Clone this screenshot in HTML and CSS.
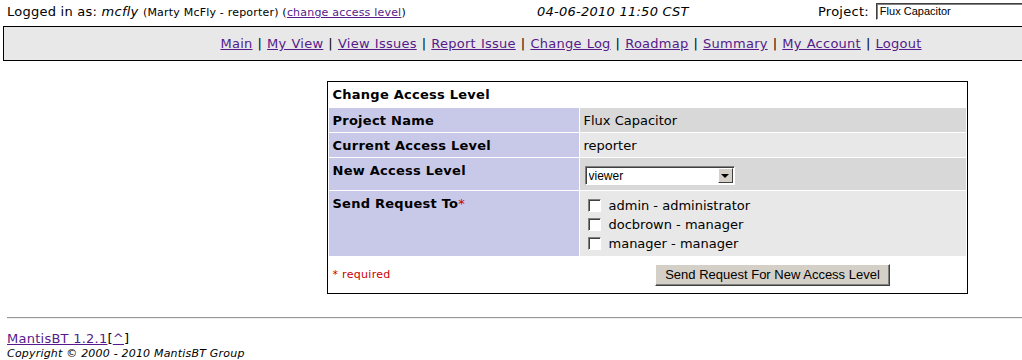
FILE: index.html
```html
<!DOCTYPE html>
<html lang="en">
<head>
    <meta charset="UTF-8">
    <title>Change Access Level - MantisBT</title>
    <link rel="stylesheet" href="styles.css">
</head>
<body>
    <div class="page">
        <div class="login-info">
            <div class="login-user">
                Logged in as: <em>mcfly</em>
                <small>(Marty McFly - reporter) (<a href="#">change access level</a>)</small>
            </div>
            <div class="login-time">04-06-2010 11:50 CST</div>
            <div class="login-project">
                Project:
                <select class="project-select">
                    <option>Flux Capacitor</option>
                </select>
            </div>
        </div>

        <div class="menu">
            <div class="menu-links">
                <a href="#">Main</a> |
                <a href="#">My View</a> |
                <a href="#">View Issues</a> |
                <a href="#">Report Issue</a> |
                <a href="#">Change Log</a> |
                <a href="#">Roadmap</a> |
                <a href="#">Summary</a> |
                <a href="#">My Account</a> |
                <a href="#">Logout</a>
            </div>
            <div class="menu-jump"></div>
        </div>

        <form class="access-form">
            <div class="form-title">Change Access Level</div>

            <div class="form-label">Project Name</div>
            <div class="form-value row-dark">Flux Capacitor</div>

            <div class="form-label">Current Access Level</div>
            <div class="form-value row-light">reporter</div>

            <div class="form-label">New Access Level</div>
            <div class="form-value row-dark select-cell">
                <span class="select-wrap">
                    <select class="level-select">
                        <option>viewer</option>
                        <option>reporter</option>
                        <option>updater</option>
                    </select>
                </span>
            </div>

            <div class="form-label">Send Request To<span class="required">*</span></div>
            <div class="form-value row-light checks">
                <label><input type="checkbox"> admin - administrator</label>
                <label><input type="checkbox"> docbrown - manager</label>
                <label><input type="checkbox"> manager - manager</label>
            </div>

            <div class="form-foot-left"><span class="required">* required</span></div>
            <div class="form-foot-right">
                <button type="button" class="button">Send Request For New Access Level</button>
            </div>
        </form>

        <hr class="footer-rule">
        <div class="footer">
            <a href="#">MantisBT 1.2.1</a>[<a href="#">^</a>]
            <div class="copyright">Copyright &copy; 2000 - 2010 MantisBT Group</div>
        </div>
    </div>
</body>
</html>
```

FILE: styles.css
```css
html, body {
    overflow-x: hidden;
}

body {
    margin: 0;
    background: #fff;
    color: #000;
    font-family: 'DejaVu Sans', Verdana, sans-serif;
    font-size: 13px;
    letter-spacing: 0.25px;
}

a {
    color: #551a8b;
}

.page {
    width: 1280px;
    padding: 0 7px;
}

/* top line */
.login-info {
    display: grid;
    grid-template-columns: 530px 281px auto;
    align-items: center;
    height: 22px;
}

.login-user small {
    font-size: 11px;
    letter-spacing: 0.2px;
}

.login-time {
    font-style: italic;
}

.login-project {
    display: flex;
    align-items: center;
    gap: 7px;
}

.project-select {
    appearance: none;
    width: 190px;
    height: 17px;
    margin: 0;
    padding: 0 3px;
    border: 1px solid #fff;
    border-top-color: #404040;
    border-left-color: #404040;
    box-shadow: inset 1px 1px 0 #808080;
    background: #fff;
    font-family: 'Liberation Sans', Arial, sans-serif;
    font-size: 11px;
    letter-spacing: 0;
    color: #000;
}

/* menu */
.menu {
    display: flex;
    margin: 4px -4px 0;
    border: 1px solid #000;
    background: #e8e8e8;
    height: 33px;
    align-items: center;
}

.menu-links {
    width: 1134px;
    text-align: center;
    word-spacing: 0.6px;
}

.menu-jump {
    flex: 1;
}

/* change access level form */
.access-form {
    display: grid;
    grid-template-columns: 250px 1fr;
    gap: 1px;
    width: 641px;
    box-sizing: border-box;
    margin: 20px auto 0;
    padding: 1px;
    border: 1px solid #000;
    background: #fff;
}

.form-title {
    grid-column: 1 / 3;
    padding: 4px 4px 4px;
    font-weight: bold;
    line-height: 16px;
}

.form-label {
    background: #c8c8e8;
    padding: 5px 4px 3px;
    font-weight: bold;
    line-height: 16px;
}

.form-value {
    padding: 5px 4px 3px;
    line-height: 16px;
    letter-spacing: 0;
}

.row-dark {
    background: #d8d8d8;
}

.row-light {
    background: #e8e8e8;
}

.required {
    color: #c00;
}

.form-label .required {
    font-weight: normal;
}

.select-cell {
    padding: 8px 5px 5px;
}

.select-wrap {
    position: relative;
    display: inline-block;
}

.level-select {
    appearance: none;
    display: block;
    width: 150px;
    height: 19px;
    margin: 0;
    padding: 0 20px 0 3px;
    border: 1px solid #fff;
    border-top-color: #808080;
    border-left-color: #808080;
    box-shadow: inset 1px 1px 0 #404040;
    background: #fff;
    font-family: 'Liberation Sans', Arial, sans-serif;
    font-size: 12px;
    color: #000;
}

.select-wrap::after {
    content: '';
    position: absolute;
    top: 2px;
    right: 2px;
    width: 15px;
    height: 15px;
    box-sizing: border-box;
    background: #d4d0c8;
    border: 1px solid #fff;
    border-right-color: #404040;
    border-bottom-color: #404040;
    pointer-events: none;
}

.select-wrap::before {
    content: '';
    position: absolute;
    z-index: 1;
    top: 8px;
    right: 6px;
    border: 4px solid transparent;
    border-top: 4px solid #000;
    border-bottom: 0;
    width: 0;
    height: 0;
    pointer-events: none;
}

.checks {
    display: flex;
    flex-direction: column;
    padding: 5px 4px 3px 8px;
}

.checks label {
    display: flex;
    align-items: center;
    height: 19px;
    gap: 8px;
}

.checks input {
    appearance: none;
    width: 13px;
    height: 13px;
    margin: 0;
    box-sizing: border-box;
    border: 1px solid #fff;
    border-top-color: #808080;
    border-left-color: #808080;
    box-shadow: inset 1px 1px 0 #404040;
    background: #fff;
}

.form-foot-left {
    display: flex;
    align-items: center;
    padding: 0 4px;
    height: 35px;
    font-size: 11px;
    letter-spacing: 0.3px;
}

.form-foot-right {
    display: flex;
    align-items: center;
    justify-content: center;
}

.button {
    height: 22px;
    padding: 0 9px;
    background: #d4d0c8;
    border: 1px solid #fff;
    border-right-color: #404040;
    border-bottom-color: #404040;
    box-shadow: inset -1px -1px 0 #808080;
    font-family: 'Liberation Sans', Arial, sans-serif;
    font-size: 13px;
    letter-spacing: 0;
    color: #000;
}

/* footer */
.footer-rule {
    margin: 23px 0 0;
    border: 0;
    border-top: 1px solid #999;
    border-bottom: 1px solid #eee;
}

.footer {
    margin-top: 12px;
    line-height: 15px;
}

.copyright {
    font-size: 11px;
    font-style: italic;
    letter-spacing: 0.2px;
}
```
